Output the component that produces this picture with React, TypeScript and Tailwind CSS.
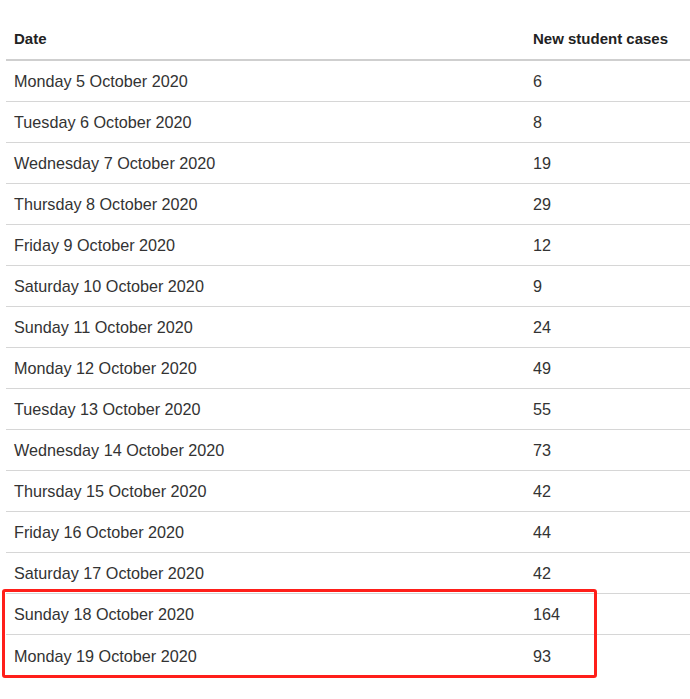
const ROWS: [string, number][] = [
  ['Monday 5 October 2020', 6],
  ['Tuesday 6 October 2020', 8],
  ['Wednesday 7 October 2020', 19],
  ['Thursday 8 October 2020', 29],
  ['Friday 9 October 2020', 12],
  ['Saturday 10 October 2020', 9],
  ['Sunday 11 October 2020', 24],
  ['Monday 12 October 2020', 49],
  ['Tuesday 13 October 2020', 55],
  ['Wednesday 14 October 2020', 73],
  ['Thursday 15 October 2020', 42],
  ['Friday 16 October 2020', 44],
  ['Saturday 17 October 2020', 42],
  ['Sunday 18 October 2020', 164],
  ['Monday 19 October 2020', 93],
]

export default function App() {
  return (
    <div className="w-[690px] h-[699px] bg-white overflow-hidden pl-[6px] relative font-['Liberation_Sans',Arial,sans-serif] text-[#333]">
      {/* header */}
      <div className="grid grid-cols-[519px_1fr] h-[61px] items-end border-b-2 border-[#cfcfcf]">
        <div className="px-2 pb-[10px] text-[15px] font-bold text-[#222] leading-5">Date</div>
        <div className="px-2 pb-[10px] text-[15px] font-bold text-[#222] leading-5">New student cases</div>
      </div>

      {ROWS.map(([date, n], i) => (
        <div
          key={date}
          className={
            'grid grid-cols-[519px_1fr] h-[41px] pt-px items-center text-[16.2px] ' +
            (i < ROWS.length - 1 ? 'border-b border-[#d6d6d6]' : '')
          }
        >
          <div className="px-2">{date}</div>
          <div className="px-2">{n}</div>
        </div>
      ))}

      {/* highlight annotation */}
      <div className="absolute left-[2px] top-[589px] w-[595px] h-[89px] border-[3px] border-[#ff1f1a] rounded-[3px] pointer-events-none" />
    </div>
  )
}
